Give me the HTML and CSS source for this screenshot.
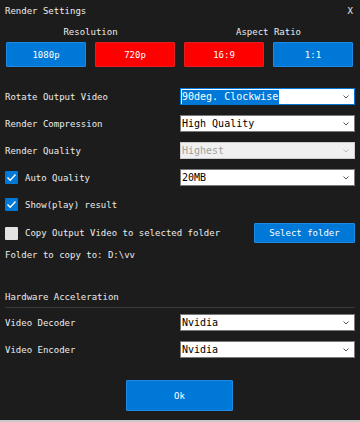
FILE: index.html
```html
<!DOCTYPE html>
<html lang="en">
<head>
    <meta charset="UTF-8">
    <meta name="viewport" content="width=device-width, initial-scale=1.0">
    <title>Render Settings</title>
    <link rel="stylesheet" href="styles.css">
</head>
<body>
    <div id="dialog">
        <!-- title bar -->
        <div class="header">
            <span>Render Settings</span>
            <span class="close">X</span>
        </div>

        <!-- resolution and aspect ratio buttons -->
        <div class="groups">
            <div class="group">
                <div class="group-label">Resolution</div>
                <div class="btn-pair">
                    <div class="btn blue">1080p</div>
                    <div class="btn red">720p</div>
                </div>
            </div>
            <div class="group">
                <div class="group-label">Aspect Ratio</div>
                <div class="btn-pair">
                    <div class="btn red">16:9</div>
                    <div class="btn blue">1:1</div>
                </div>
            </div>
        </div>

        <div class="settings">
            <div class="row">
                <div class="label">Rotate Output Video</div>
                <div class="select focused"><span class="sel-text">90deg. Clockwise</span><svg class="chev" width="6" height="4" viewBox="0 0 6 4"><path d="M0.5 0.5 L3 3 L5.5 0.5" fill="none" stroke="#555" stroke-width="1"/></svg></div>
            </div>
            <div class="row">
                <div class="label">Render Compression</div>
                <div class="select"><span>High Quality</span><svg class="chev" width="6" height="4" viewBox="0 0 6 4"><path d="M0.5 0.5 L3 3 L5.5 0.5" fill="none" stroke="#555" stroke-width="1"/></svg></div>
            </div>
            <div class="row">
                <div class="label">Render Quality</div>
                <div class="select disabled"><span>Highest</span><svg class="chev" width="6" height="4" viewBox="0 0 6 4"><path d="M0.5 0.5 L3 3 L5.5 0.5" fill="none" stroke="#bbb" stroke-width="1"/></svg></div>
            </div>
            <div class="row">
                <div class="label check-label">
                    <span class="checkbox checked"><svg width="13" height="13" viewBox="0 0 13 13"><path d="M2.5 6.5 L5.2 9.2 L10.5 3.5" fill="none" stroke="#fff" stroke-width="1.4"/></svg></span>
                    Auto Quality
                </div>
                <div class="select"><span>20MB</span><svg class="chev" width="6" height="4" viewBox="0 0 6 4"><path d="M0.5 0.5 L3 3 L5.5 0.5" fill="none" stroke="#555" stroke-width="1"/></svg></div>
            </div>
            <div class="row">
                <div class="label check-label">
                    <span class="checkbox checked"><svg width="13" height="13" viewBox="0 0 13 13"><path d="M2.5 6.5 L5.2 9.2 L10.5 3.5" fill="none" stroke="#fff" stroke-width="1.4"/></svg></span>
                    Show(play) result
                </div>
            </div>
            <div class="row copy-row">
                <div class="check-label">
                    <span class="checkbox"></span>
                    Copy Output Video to selected folder
                </div>
                <div class="btn blue folder-btn">Select folder</div>
            </div>
            <div class="folder-path">Folder to copy to: D:\vv</div>

            <!-- hardware section -->
            <div class="section-title">Hardware Acceleration</div>
            <div class="row hw-row">
                <div class="label">Video Decoder</div>
                <div class="select"><span>Nvidia</span><svg class="chev" width="6" height="4" viewBox="0 0 6 4"><path d="M0.5 0.5 L3 3 L5.5 0.5" fill="none" stroke="#555" stroke-width="1"/></svg></div>
            </div>
            <div class="row">
                <div class="label">Video Encoder</div>
                <div class="select"><span>Nvidia</span><svg class="chev" width="6" height="4" viewBox="0 0 6 4"><path d="M0.5 0.5 L3 3 L5.5 0.5" fill="none" stroke="#555" stroke-width="1"/></svg></div>
            </div>
        </div>

        <div class="footer">
            <div class="btn blue ok-btn">Ok</div>
        </div>
    </div>
</body>
</html>
```

FILE: styles.css
```css
/* base */
body {
    margin: 0;
    padding: 0;
    background-color: #1c1c1c;
    color: #ececec;
    font-family: "DejaVu Sans Mono", "Liberation Mono", monospace;
    font-size: 9px;
}

#dialog {
    width: 360px;
    height: 420px;
    border-bottom: 2px solid #c8c8c8;
}

.header {
    display: flex;
    justify-content: space-between;
    height: 22px;
    line-height: 22px;
    padding: 0 5px;
}

.close {
    margin-right: 2px;
}

/* resolution / aspect ratio */
.groups {
    display: flex;
    gap: 9px;
    padding: 0 7px 0 6px;
}

.group {
    flex: 1;
}

.group-label {
    height: 20px;
    line-height: 20px;
    text-align: center;
}

.btn-pair {
    display: flex;
    gap: 9px;
}

.btn {
    display: flex;
    justify-content: center;
    align-items: center;
    box-sizing: border-box;
    height: 25px;
    flex: 1;
    color: #fff;
    border-radius: 1px;
}

.blue {
    background-color: #0078d7;
    border: 1px solid #1e8ae6;
}

.red {
    background-color: #ff0000;
    border: 1px solid #e02020;
}

/* settings rows */
.settings {
    margin-top: 16px;
    padding: 0 5px;
}

.row {
    display: flex;
    align-items: center;
    height: 27px;
}

.label {
    width: 175px;
}

.check-label {
    display: flex;
    align-items: center;
    gap: 7px;
}

.checkbox {
    display: inline-block;
    width: 13px;
    height: 13px;
    background-color: #e2e2e2;
    border-radius: 1px;
}

.checkbox.checked {
    background-color: #0078d7;
}

.checkbox svg {
    display: block;
}

.select {
    display: flex;
    align-items: center;
    justify-content: space-between;
    box-sizing: border-box;
    width: 175px;
    height: 17px;
    padding: 0 5px 0 1px;
    background-color: #fff;
    border: 1px solid #7a7a7a;
    color: #000;
    font-size: 10px;
}

.select.focused {
    border-color: #0078d7;
}

.sel-text {
    background-color: #0078d7;
    color: #fff;
    line-height: 14px;
    padding-right: 1px;
}

.select.disabled {
    background-color: #f0f0f0;
    border-color: #ccc;
    color: #a0a0a0;
}

.chev {
    display: block;
}

.copy-row {
    justify-content: space-between;
    height: 20px;
    margin-top: 5px;
}

.folder-btn {
    flex: none;
    width: 101px;
    height: 20px;
}

.folder-path {
    height: 16px;
    line-height: 16px;
    margin-top: 4px;
}

.section-title {
    height: 16px;
    line-height: 16px;
    margin-top: 26px;
    padding-bottom: 2px;
    border-bottom: 1px solid #3a3a3a;
}

.hw-row {
    margin-top: 1px;
}

.footer {
    display: flex;
    justify-content: center;
    margin-top: 17px;
    padding-right: 1px;
}

.ok-btn {
    flex: none;
    width: 107px;
    height: 31px;
}
```
